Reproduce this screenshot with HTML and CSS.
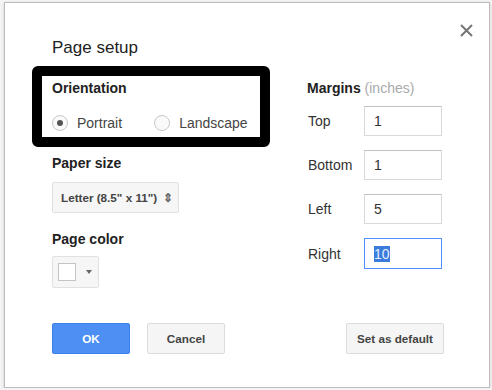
FILE: index.html
```html
<!DOCTYPE html>
<html lang="en">
<head>
    <meta charset="UTF-8">
    <meta name="viewport" content="width=device-width, initial-scale=1.0">
    <title>Page setup</title>
    <link rel="stylesheet" href="styles.css">
</head>
<body>
    <div class="dialog">
        <button class="close" aria-label="Close">
            <svg width="13" height="13" viewBox="0 0 13 13"><path d="M1 1L12 12M12 1L1 12" stroke="#757575" stroke-width="2" fill="none"/></svg>
        </button>
        <h1 class="title">Page setup</h1>
        <div class="cols">
            <div class="col-left">
                <div class="orient">
                    <div class="label">Orientation</div>
                    <div class="radios">
                        <label class="radio"><span class="circle on"></span>Portrait</label>
                        <label class="radio"><span class="circle"></span>Landscape</label>
                    </div>
                </div>
                <div class="label paper-label">Paper size</div>
                <div class="select">Letter (8.5" x 11")<span class="arrows">&#8661;</span></div>
                <div class="label color-label">Page color</div>
                <div class="colorbtn"><span class="swatch"></span><span class="caret"></span></div>
            </div>
            <div class="col-right">
                <div class="label">Margins <span class="unit">(inches)</span></div>
                <div class="rows">
                    <div class="row"><span class="rlabel">Top</span><div class="input">1</div></div>
                    <div class="row"><span class="rlabel">Bottom</span><div class="input">1</div></div>
                    <div class="row"><span class="rlabel">Left</span><div class="input">5</div></div>
                    <div class="row"><span class="rlabel">Right</span><div class="input focus"><span class="sel">10</span></div></div>
                </div>
            </div>
        </div>
        <div class="buttons">
            <button class="btn ok">OK</button>
            <button class="btn">Cancel</button>
            <button class="btn default">Set as default</button>
        </div>
    </div>
</body>
</html>
```
FILE: styles.css
```css
body{
    margin: 0;
    padding: 0;
    background: #f4f4f4;
    font-family: "Liberation Sans", Arial, sans-serif;
    color: #222;
}
.dialog{
    position: relative;
    box-sizing: border-box;
    width: 486px;
    height: 386px;
    margin: 2px 0 0 4px;
    padding: 35px 45px 0 47px;
    background: #fff;
    border: 1px solid #bcbcbc;
    box-shadow: 0 1px 3px rgba(0,0,0,.15);
}
.close{
    position: absolute;
    top: 20px;
    right: 15px;
    width: 15px;
    height: 15px;
    padding: 1px;
    border: 0;
    background: none;
}
.title{
    margin: 0;
    font-size: 17px;
    line-height: 20px;
    font-weight: normal;
    color: #222;
}
.cols{
    display: flex;
    margin-top: 8px;
}
.col-left{
    width: 255px;
}
.label{
    font-size: 14px;
    line-height: 16px;
    font-weight: bold;
    color: #222;
}
.unit{
    font-weight: normal;
    color: #aaa;
}
.orient{
    box-sizing: border-box;
    width: 238px;
    margin-left: -20px;
    padding: 4px 10px 4px 10px;
    border: 10px solid #000;
    border-radius: 6px;
}
.radios{
    display: flex;
    gap: 30px;
    margin-top: 17px;
}
.radio{
    display: flex;
    align-items: center;
    gap: 9px;
    height: 20px;
    font-size: 14px;
    color: #444;
}
.radio + .radio{
    margin-left: 2px;
}
.circle{
    box-sizing: border-box;
    width: 16px;
    height: 16px;
    border: 1px solid #c8c8c8;
    border-radius: 50%;
    background: #fafafa;
    display: flex;
    align-items: center;
    justify-content: center;
}
.circle.on::after{
    content: '';
    width: 6px;
    height: 6px;
    border-radius: 50%;
    background: #555;
}
.paper-label{
    margin-top: 8px;
}
.select{
    box-sizing: border-box;
    display: flex;
    align-items: center;
    width: 127px;
    height: 31px;
    margin-top: 11px;
    padding-left: 8px;
    border: 1px solid #e0e0e0;
    border-radius: 2px;
    background: #f6f6f6;
    font-size: 11.7px;
    font-weight: bold;
    color: #444;
}
.arrows{
    margin-left: 6px;
    font-size: 12px;
    color: #666;
}
.color-label{
    margin-top: 18px;
}
.colorbtn{
    box-sizing: border-box;
    display: flex;
    align-items: center;
    width: 47px;
    height: 32px;
    margin-top: 9px;
    padding-left: 5px;
    border: 1px solid #e0e0e0;
    border-radius: 2px;
    background: #f6f6f6;
}
.swatch{
    box-sizing: border-box;
    width: 18px;
    height: 18px;
    border: 1px solid #c4c4c4;
    background: #fff;
}
.caret{
    margin-left: 10px;
    width: 0;
    height: 0;
    border-left: 3.5px solid transparent;
    border-right: 3.5px solid transparent;
    border-top: 4px solid #666;
}
.col-right .label{
    margin-top: 14px;
}
.rows{
    display: flex;
    flex-direction: column;
    gap: 14px;
    margin-top: 10px;
}
.row{
    display: flex;
    align-items: center;
}
.rlabel{
    width: 56px;
    padding-left: 1px;
    font-size: 14px;
    color: #333;
}
.input{
    box-sizing: border-box;
    display: flex;
    align-items: center;
    width: 78px;
    height: 30px;
    padding-left: 9px;
    border: 1px solid #d9d9d9;
    border-top-color: #c0c0c0;
    font-size: 14px;
    color: #333;
}
.input.focus{
    height: 31px;
    border-color: #4d90fe;
}
.sel{
    background: #3a7bdc;
    color: #e6eeff;
}
.buttons{
    display: flex;
    gap: 17px;
    margin-top: 35px;
}
.btn{
    box-sizing: border-box;
    width: 78px;
    height: 31px;
    border: 1px solid #dcdcdc;
    border-radius: 2px;
    background: #f5f5f5;
    font-family: "Liberation Sans", Arial, sans-serif;
    font-size: 11.7px;
    font-weight: bold;
    color: #444;
}
.btn.ok{
    background: #4d8ff2;
    border-color: #3b7fe8;
    color: #fff;
}
.btn.default{
    width: 98px;
    margin-left: auto;
}
```
